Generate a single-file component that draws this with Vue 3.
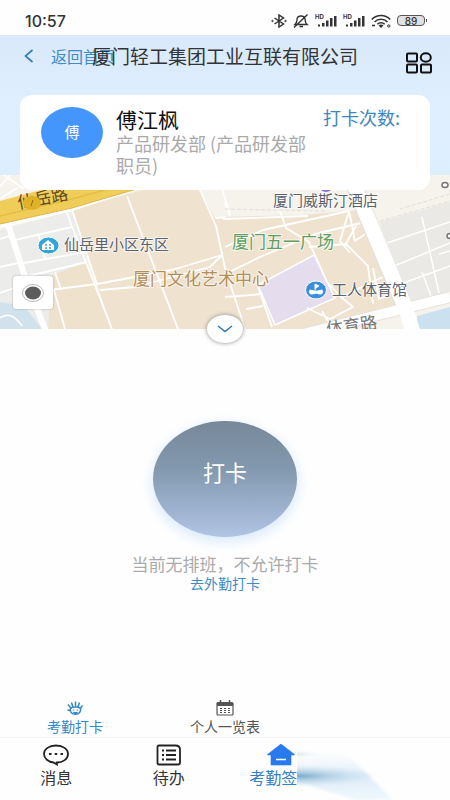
<script setup>
import { ref } from 'vue'

const current = ref('punch')
const mapOpen = ref(false)
</script>

<template>
  <div class="page">
    <div class="status">
      <time>10:57</time>
      <div class="signals">
        <svg width="16" height="14" viewBox="0 0 16 14" fill="none" stroke="#333" stroke-width="1.5">
          <path d="M3.500 4l9 6L8 13V1l4.500 3-9 6" />
          <circle cx="1.500" cy="7" r=".8" fill="#333" stroke-width=".6" />
          <circle cx="14.500" cy="7" r=".8" fill="#333" stroke-width=".6" />
        </svg>
        <svg width="16" height="14" viewBox="0 0 16 14" fill="none" stroke="#333" stroke-width="1.400">
          <path d="M2 10.500h12c-2-1.500-1.500-3-1.800-5C11.800 3 10 2 8 2S4.200 3 4 5.500c-.2 2 0 3.500-2 5zM6.500 12.500h3.500M1 13.500L14.500.5" />
        </svg>
        <svg v-for="n in 2" :key="n" width="22" height="14" viewBox="0 0 22 14" fill="#333">
          <text x="0" y="5" class="hd">HD</text>
          <path d="M3 10.500h2v2H3zM7 9h2.500v3.500H7zM11 6.500h2.500v6H11zM15 4h2.500v8.500H15zM19 2h2.500v10.500H19z" />
        </svg>
        <svg width="20" height="14" viewBox="0 0 20 14" fill="none" stroke="#333" stroke-width="1.600">
          <path d="M.8 5.500C6 .2 14 .2 19.200 5.500M3.500 8C7 4.400 13 4.400 16.500 8M6.300 10.300c2-2 5.400-2 7.400 0" />
          <path d="M7.500 11.500L10 14l2.500-2.500C11 10 9 10 7.500 11.500z" fill="#333" stroke="none" />
          <circle cx="17.800" cy="12" r="1.200" stroke-width="1" />
          <path d="M1 11.500h3" />
        </svg>
        <span class="battery"><b>89</b></span>
      </div>
    </div>

    <header class="top">
      <nav class="bar">
        <a class="back" href="#">
          <svg width="10" height="14" viewBox="0 0 10 14" fill="none" stroke="#347fb5" stroke-width="1.700">
            <path d="M8.500 1L1.500 7l7 6" />
          </svg>
          <span>返回首页</span>
        </a>
        <h1>厦门轻工集团工业互联有限公司</h1>
        <button class="apps" type="button" aria-label="应用">
          <svg width="28" height="22" viewBox="0 0 28 22" fill="none" stroke="#111" stroke-width="2">
            <rect x="2" y="1.500" width="10" height="8" rx="1" />
            <ellipse cx="20.800" cy="5.500" rx="5" ry="4.200" />
            <rect x="2" y="12.500" width="10" height="8" rx="1" />
            <rect x="16" y="12.500" width="10" height="8" rx="1" />
          </svg>
        </button>
      </nav>
      <section class="card">
        <div class="avatar">傅</div>
        <div class="who">
          <h2>傅江枫</h2>
          <p>产品研发部 (产品研发部职员)</p>
        </div>
        <div class="count">打卡次数:</div>
      </section>
    </header>

    <section class="map">
      <svg class="canvas" viewBox="0 0 450 154" preserveAspectRatio="xMidYMid slice">
        <rect width="450" height="154" fill="#f6f3ec" />
        <path d="M0 55L72 36l16 52 24 66H0z" fill="#ececea" />
        <path d="M52 100l35-13 25 67H48z" fill="#efe2cd" />
        <path d="M72 35l70-20h58l14 27 88-2 58-5 36 95-66 24H112z" fill="#efe3cf" />
        <path d="M380 47l70-20v90l-45 12z" fill="#eae9e6" />
        <path d="M0 127l24 4 18 23H0z" fill="#d1e2ec" />
        <path d="M417 141l33-9v22h-33z" fill="#cce1ef" />
        <path d="M258 110l56-30 21 43-60 27z" fill="#e5dced" stroke="#fff" stroke-width="1.500" />
        <g fill="none" stroke="#fff" stroke-width="1.800" stroke-linejoin="round">
          <path d="M66 36l46 118M72 35l25 74M127 21l51 133M200 15l16 36 9 42 20 61" />
          <path d="M50 115l47-6 75-14 50-15M225 99l35-17 55-23 46-11" />
          <path d="M100 115l35-3 75-20 12-12M55 97l6 18M38 58l7 25M15 65l57-13M18 89l68-12M20 103l67-16" />
          <path d="M54 115l11 39M0 64l14-4M0 92l18-4M0 118l20-7M0 24l17-11M0 12L10 0M4 0l20 14" />
          <path d="M280 36l6 17 23 14 18 40 14 15 12 10-23 12-23-11M341 122l42-20" />
          <path d="M225 72l38-17 86-19 6 30 18-12M349 36l-9 30 10 12M309 72l37-3 22 22 5 38M345 70l11-19M225 122l38-3M256 106l16 46M246 134l17-3M322 136l8 14M373 93l6 31 14-5" />
          <path d="M387 68l63-21M392 92l58-24M398 110l52-19M422 42l17 76M422 97l9 24M439 79l11-3" stroke-width="1.500" />
          <path d="M215 43l11-1M218 0l12 40M225 28l5 13M223 44l85-3" />
        </g>
        <path d="M8 49l18 56 22 57" fill="none" stroke="#fff" stroke-width="6" />
        <g fill="none" stroke-linejoin="round">
          <path d="M348-4l58 140" stroke="#e4e1dc" stroke-width="17" />
          <path d="M300 160l58-15 92-23" stroke="#e4e1dc" stroke-width="12" />
          <path d="M348-4l58 138 9 30" stroke="#fff" stroke-width="15" />
          <path d="M300 160l58-15 92-23" stroke="#fff" stroke-width="10" />
          <path d="M380 46l70-20M400 34l50-15M225 34l100 2" stroke="#e4e0d8" stroke-dasharray="4 2" />
          <path d="M0 143c8-6 15-2 22 8" stroke="#fff" stroke-width="1.500" />
        </g>
        <path d="M0 51l72-17L150 8" fill="none" stroke="#fff" stroke-width="4" />
        <path d="M0 26L60 10h90L72 33 0 49z" fill="#f0cd58" />
        <path d="M0 41l72-17 62-17" fill="none" stroke="#e5bd45" stroke-width="1.500" />
        <path d="M0 49l72-16 68-20" fill="none" stroke="#dfb450" stroke-width="1" />
        <g transform="rotate(-11 44 22)"><text x="17" y="29" class="road">仙岳路</text></g>
        <ellipse cx="32" cy="28" rx="9" ry="7" fill="#dfb126" />
        <path d="M33 25l-2 6" stroke="#8a6b20" />

        <ellipse cx="326" cy="11" rx="7" ry="6" fill="#8d78cf" />
        <ellipse cx="445" cy="10" rx="3" ry="2.500" fill="#fff" stroke="#777" stroke-width="1.500" />
        <ellipse cx="450" cy="61" rx="3" ry="2.500" fill="#fff" stroke="#777" stroke-width="1.500" />

        <ellipse cx="48.500" cy="70.500" rx="10.500" ry="8.500" fill="#32a6d6" stroke="#fff" />
        <path d="M42 70l6-5 6 5v5H42z" fill="#fff" />
        <path d="M45 70h2m2 0h2m-6 3h2m2 0h2" stroke="#32a6d6" stroke-width="1.500" />
        <ellipse cx="316" cy="115" rx="10.500" ry="9" fill="#3a8fdb" stroke="#fff" />
        <path d="M310 115c-2 4 1 5 6 3 5 2 8 1 6-3l-4 1h-4zM315 115v-6l4 2-3 2" fill="#fff" stroke="#fff" />

        <text x="64" y="75" class="poi">仙岳里小区东区</text>
        <text x="273" y="31" class="poi">厦门威斯汀酒店</text>
        <text x="332" y="120" class="poi">工人体育馆</text>
        <text x="133" y="110" class="poi big brown">厦门文化艺术中心</text>
        <text x="232" y="73" class="poi big green">厦门五一广场</text>
        <g transform="rotate(-8 350 150)"><text x="326" y="157" class="road grey">体育路</text></g>
      </svg>
      <button class="locate" type="button" aria-label="定位">
        <svg width="24" height="20" viewBox="0 0 24 20">
          <ellipse cx="12" cy="10" rx="10.500" ry="8.500" fill="#fff" stroke="#bbb" />
          <ellipse cx="12" cy="10" rx="8" ry="6.500" fill="#5c5c5c" />
        </svg>
      </button>
      <button class="toggle" type="button" aria-label="展开地图" @click="mapOpen = !mapOpen">
        <svg width="16" height="8" viewBox="0 0 16 8" fill="none" stroke="#2d78b8" stroke-width="1.500">
          <path d="M1 1l7 5.500L15 1" />
        </svg>
      </button>
    </section>

    <main class="main">
      <button class="punch" type="button">打卡</button>
      <p class="hint">当前无排班，不允许打卡</p>
      <a class="outside" href="#">去外勤打卡</a>
    </main>

    <nav class="tabs">
      <button type="button" :class="{ on: current === 'punch' }" @click="current = 'punch'">
        <svg width="16" height="14" viewBox="0 0 16 14" fill="none" stroke="currentColor" stroke-width="1.500">
          <path d="M3.500 7.500C2.500 11 5 13.200 8.500 13.200S14 11 13.500 7.500C12 5.500 5 5.500 3.500 7.500zM3.800 7L1 3.500M5.800 6L4.500 1.500M8.500 5.500V.5M11 6l1.500-4.500M13.500 7.500l2-3M3 9.500L.5 9M6.500 8.500v1M10.500 8.500v1M6.500 11c1 1 3 1 4 0" />
        </svg>
        <span>考勤打卡</span>
      </button>
      <button type="button" :class="{ on: current === 'list' }" @click="current = 'list'">
        <svg width="18" height="16" viewBox="0 0 18 16" fill="none" stroke="currentColor" stroke-width="1.200">
          <rect x="1" y="2.500" width="16" height="12.500" rx="1" />
          <path d="M1 4.500h16" stroke-width="3" />
          <path d="M4.500 0v4M13.500 0v4" stroke-width="1.500" />
          <path d="M4 8.500h2m2 0h2m2 0h2M4 10.500h2m2 0h2m2 0h2M4 12.500h2m2 0h2m2 0h2" />
        </svg>
        <span>个人一览表</span>
      </button>
    </nav>

    <nav class="dock">
      <a href="#">
        <svg width="28" height="22" viewBox="0 0 28 22" fill="none" stroke="#222" stroke-width="1.800">
          <path d="M14 1.500C7 1.500 2 5 2 10c0 4.500 4.500 8 9.500 8.500l3.500 2-.2-2C21 18.500 26 15 26 10c0-5-5-8.500-12-8.500z" />
          <path d="M7 9h2.500v2H7zM12.700 9h2.500v2h-2.500zM18.500 9H21v2h-2.500z" fill="#222" stroke="none" />
        </svg>
        <span>消息</span>
      </a>
      <a href="#">
        <svg width="28" height="22" viewBox="0 0 28 22" fill="none" stroke="#222" stroke-width="1.800">
          <path d="M4 1.500h16.500q4.500 0 4.500 4v13q0 2-2 2H4q-1.500 0-1.500-1.500V3q0-1.500 1.500-1.500z" />
          <path d="M7 6.500h2m2 0h10M7 11h2m2 0h10M7 15.500h2m2 0h10" />
        </svg>
        <span>待办</span>
      </a>
      <a href="#" class="on">
        <svg width="28" height="22" viewBox="0 0 28 22" fill="#2879ee">
          <path d="M14 0L.8 10.200c-.5.500-.2.800.3.800H4v10h20V11h2.900c.5 0 .8-.3.300-.8z" stroke="#2879ee" stroke-width=".6" stroke-linejoin="round" />
          <path d="M9 15.500h10" stroke="#fff" stroke-width="1.500" />
        </svg>
        <span class="cut">考勤签</span>
      </a>
      <svg class="smear" viewBox="0 0 100 60" aria-hidden="true">
        <defs>
          <linearGradient id="wedge" x1="0" y1="0" x2="0" y2="1">
            <stop offset="0" stop-color="#f4f9fd" stop-opacity="0" />
            <stop offset=".5" stop-color="#dcebf7" />
            <stop offset="1" stop-color="#f0f8fe" />
          </linearGradient>
          <radialGradient id="core">
            <stop offset="0" stop-color="#6d9fc2" stop-opacity=".9" />
            <stop offset=".4" stop-color="#9cc0da" stop-opacity=".6" />
            <stop offset="1" stop-color="#c8dfef" stop-opacity="0" />
          </radialGradient>
          <filter id="soft"><feGaussianBlur stdDeviation="1.500" /></filter>
        </defs>
        <path d="M0 14l46-4 24 24 26 26H60L0 42z" fill="url(#wedge)" filter="url(#soft)" />
        <ellipse cx="0" cy="36" rx="80" ry="11" fill="url(#core)" />
        <ellipse cx="0" cy="14" rx="24" ry="4" fill="url(#core)" opacity=".25" />
      </svg>
    </nav>
  </div>
</template>

<style>
body {
  margin: 0;
  background: #fff;
}
</style>

<style scoped>
.page {
  min-height: 100vh;
  display: flex;
  flex-direction: column;
  background: #fefefe;
  color: #333;
  font-family: "Noto Sans CJK SC", sans-serif;
  overflow: hidden;
}
h1, h2, p {
  margin: 0;
  font-weight: 400;
}
a {
  color: inherit;
  text-decoration: none;
}
button {
  border: 0;
  padding: 0;
  background: none;
  color: inherit;
  font: inherit;
}
svg {
  display: block;
}
.status {
  height: 35px;
  padding: 6px 25px 0 25px;
  box-sizing: border-box;
  display: flex;
  align-items: center;
  justify-content: space-between;
}
.status time {
  font: 500 16px/20px Inter, sans-serif;
}
.signals {
  display: flex;
  align-items: center;
  gap: 6px;
}
.hd {
  font: 700 6px Inter, sans-serif;
}
.battery {
  position: relative;
  width: 28px;
  height: 11px;
  box-sizing: border-box;
  border: 1px solid #555;
  border-radius: 4px;
  background: #e2e2e2;
  display: flex;
  align-items: center;
  justify-content: center;
}
.battery::after {
  content: "";
  position: absolute;
  right: -3px;
  top: 3px;
  width: 1px;
  height: 3px;
  background: #555;
}
.battery b {
  font: 500 10px/10px Inter, sans-serif;
}
.top {
  background: linear-gradient(#d9e9fb, #e0effe 50%, #ddeefe);
}
.bar {
  position: relative;
  height: 60px;
  padding: 0 17px 0 24px;
  display: flex;
  justify-content: space-between;
  align-items: flex-start;
}
.back {
  height: 42px;
  display: flex;
  align-items: center;
  gap: 17px;
  color: #3c8cc6;
  font-size: 16px;
}
.bar h1 {
  position: absolute;
  left: 0;
  right: 0;
  top: 0;
  text-align: center;
  font-size: 19px;
  line-height: 42px;
  white-space: nowrap;
  pointer-events: none;
}
.apps {
  height: 56px;
  display: flex;
  align-items: center;
}
.card {
  position: relative;
  z-index: 1;
  min-height: 95px;
  margin: 0 20px -15px;
  padding: 12px 30px 12px 21px;
  box-sizing: border-box;
  display: flex;
  align-items: flex-start;
  background: #fff;
  border-radius: 12px;
}
.avatar {
  width: 62px;
  height: 51px;
  margin-right: 13px;
  flex: none;
  border-radius: 50%;
  background: #4596fc;
  color: #fff;
  font-size: 15px;
  line-height: 50px;
  text-align: center;
}
.who {
  flex: 1;
}
.who h2 {
  color: #111;
  font-size: 21px;
  line-height: 25px;
}
.who p {
  color: #aaa;
  font-size: 18px;
  line-height: 22px;
}
.count {
  color: #3c86c0;
  font-size: 18px;
  line-height: 20px;
}
.map {
  position: relative;
}
.canvas {
  width: 100%;
  height: 154px;
}
.poi {
  font-size: 15px;
  fill: #5a6270;
  stroke: #fff;
  stroke-width: 2px;
  stroke-opacity: .6;
  paint-order: stroke;
}
.big {
  font-size: 17px;
}
.brown {
  fill: #b28e58;
}
.green {
  fill: #5f9f5f;
}
.road {
  font-size: 17px;
  fill: #5c4a20;
}
.grey {
  fill: #777;
}
.locate {
  position: absolute;
  left: 13px;
  bottom: 20px;
  width: 40px;
  height: 33px;
  display: flex;
  align-items: center;
  justify-content: center;
  background: #fff;
  border-radius: 3px;
  box-shadow: 0 0 2px #999;
}
.toggle {
  position: absolute;
  left: 50%;
  bottom: -14px;
  width: 36px;
  height: 28px;
  display: flex;
  align-items: center;
  justify-content: center;
  transform: translateX(-50%);
  background: #fff;
  border-radius: 50%;
  box-shadow: 0 0 4px #888;
}
.main {
  flex: 1;
  padding-top: 92px;
  display: flex;
  flex-direction: column;
  align-items: center;
}
.punch {
  width: 144px;
  height: 116px;
  padding-bottom: 17px;
  border-radius: 50%;
  background: linear-gradient(#778899, #8298ae 40%, #b0c4e4);
  box-shadow: 0 4px 14px #d3e7fc;
  color: #fff;
  font-size: 22px;
}
.hint {
  margin-top: 17px;
  color: #aaa;
  font-size: 17px;
  line-height: 20px;
}
.outside {
  color: #3c8cc6;
  font-size: 14px;
  line-height: 18px;
}
.tabs {
  display: grid;
  grid-template-columns: repeat(3, 1fr);
  border-bottom: 1px solid #f3f3f3;
  color: #555;
}
.tabs button {
  padding-bottom: 1px;
  display: flex;
  flex-direction: column;
  align-items: center;
  font-size: 14px;
  line-height: 20px;
}
.tabs svg {
  height: 16px;
}
.tabs .on {
  color: #3389c4;
}
.dock {
  position: relative;
  height: 62px;
  display: grid;
  grid-template-columns: repeat(4, 1fr);
}
.dock a {
  padding-top: 6px;
  display: flex;
  flex-direction: column;
  align-items: center;
  gap: 1px;
  font-size: 16px;
  line-height: 20px;
}
.dock .on {
  color: #3480c4;
}
.cut {
  width: 64px;
}
.smear {
  position: absolute;
  left: 66%;
  bottom: 0;
  width: 100px;
  height: 60px;
}
</style>
